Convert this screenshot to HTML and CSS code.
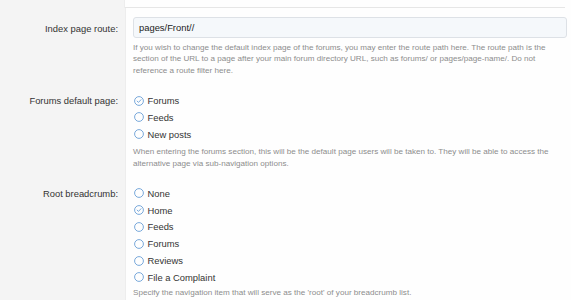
FILE: index.html
```html
<!DOCTYPE html>
<html>
<head>
<meta charset="utf-8">
<link rel="stylesheet" href="styles.css">
</head>
<body>
<div class="form">
  <div class="row row-top">
    <div class="label"></div>
    <div class="content"><div class="sep"></div></div>
  </div>
  <div class="row row-first">
    <div class="label"><span class="label-text label-input">Index page route:</span></div>
    <div class="content">
      <div class="input">pages/Front//</div>
      <p class="hint">If you wish to change the default index page of the forums, you may enter the route path here. The route path is the section of the URL to a page after your main forum directory URL, such as forums/ or pages/page-name/. Do not reference a route filter here.</p>
    </div>
  </div>
  <div class="row">
    <div class="label"><span class="label-text">Forums default page:</span></div>
    <div class="content">
      <ul class="radios">
        <li><span class="radio checked"><svg viewBox="0 0 10 10" width="10" height="10"><circle cx="5" cy="5" r="4.4" fill="none" stroke="#6a9fd6" stroke-width="0.9"/><path d="M3.1 5.1 L4.5 6.4 L7 3.7" fill="none" stroke="#6a9fd6" stroke-width="0.9" stroke-linecap="round" stroke-linejoin="round"/></svg></span>Forums</li>
        <li><span class="radio"><svg viewBox="0 0 10 10" width="10" height="10"><circle cx="5" cy="5" r="4.4" fill="none" stroke="#6a9fd6" stroke-width="0.9"/></svg></span>Feeds</li>
        <li><span class="radio"><svg viewBox="0 0 10 10" width="10" height="10"><circle cx="5" cy="5" r="4.4" fill="none" stroke="#6a9fd6" stroke-width="0.9"/></svg></span>New posts</li>
      </ul>
      <p class="hint hint-after">When entering the forums section, this will be the default page users will be taken to. They will be able to access the alternative page via sub-navigation options.</p>
    </div>
  </div>
  <div class="row">
    <div class="label"><span class="label-text">Root breadcrumb:</span></div>
    <div class="content">
      <ul class="radios">
        <li><span class="radio"><svg viewBox="0 0 10 10" width="10" height="10"><circle cx="5" cy="5" r="4.4" fill="none" stroke="#6a9fd6" stroke-width="0.9"/></svg></span>None</li>
        <li><span class="radio checked"><svg viewBox="0 0 10 10" width="10" height="10"><circle cx="5" cy="5" r="4.4" fill="none" stroke="#6a9fd6" stroke-width="0.9"/><path d="M3.1 5.1 L4.5 6.4 L7 3.7" fill="none" stroke="#6a9fd6" stroke-width="0.9" stroke-linecap="round" stroke-linejoin="round"/></svg></span>Home</li>
        <li><span class="radio"><svg viewBox="0 0 10 10" width="10" height="10"><circle cx="5" cy="5" r="4.4" fill="none" stroke="#6a9fd6" stroke-width="0.9"/></svg></span>Feeds</li>
        <li><span class="radio"><svg viewBox="0 0 10 10" width="10" height="10"><circle cx="5" cy="5" r="4.4" fill="none" stroke="#6a9fd6" stroke-width="0.9"/></svg></span>Forums</li>
        <li><span class="radio"><svg viewBox="0 0 10 10" width="10" height="10"><circle cx="5" cy="5" r="4.4" fill="none" stroke="#6a9fd6" stroke-width="0.9"/></svg></span>Reviews</li>
        <li><span class="radio"><svg viewBox="0 0 10 10" width="10" height="10"><circle cx="5" cy="5" r="4.4" fill="none" stroke="#6a9fd6" stroke-width="0.9"/></svg></span>File a Complaint</li>
      </ul>
      <p class="hint hint-after hint-last">Specify the navigation item that will serve as the 'root' of your breadcrumb list.</p>
    </div>
  </div>
</div>
</body>
</html>
```

FILE: styles.css
```css
html, body {
  margin: 0;
  padding: 0;
  background: #fefefe;
  font-family: "Liberation Sans", Arial, sans-serif;
  color: #333;
}
.form {
  display: flex;
  flex-direction: column;
  height: 300px;
  overflow: hidden;
}
.row {
  display: flex;
}
.row:last-child {
  flex: 1;
}
.label {
  width: 118px;
  flex: none;
  background: #f4f4f4;
  text-align: right;
  padding-right: 7px;
  font-size: 9.4px;
  color: #333;
}
.label-text {
  display: block;
  line-height: 17px;
  padding-top: 16px;
}
.row-first .label-text {
  line-height: 21px;
  padding-top: 10px;
}
.content {
  flex: 1;
  padding: 16px 4px 0 7px;
  border-left: 1px solid #ededed;
}
.row-top .content {
  padding: 0 6px 0 0;
  border-left: 1px solid #ededed;
  margin-left: -1px;
}
.sep {
  height: 7px;
  border-bottom: 1px solid #e6e6e6;
}
.row-first .content {
  padding-top: 9px;
}
.input {
  height: 19px;
  line-height: 19px;
  border: 1px solid #dde1e6;
  border-radius: 3px;
  background: #f5f8fb;
  padding-left: 5px;
  font-size: 9.4px;
  color: #222;
}
.hint {
  margin: 4px 0 0 0;
  font-size: 8.1px;
  line-height: 11.4px;
  color: #8d8d8d;
}
.hint-after {
  margin-top: 3.5px;
}
.hint-last {
  margin-top: 1.5px;
}
.radios {
  list-style: none;
  margin: 0;
  padding: 0;
}
.radios li {
  display: flex;
  align-items: center;
  height: 16.8px;
  font-size: 9.4px;
  color: #333;
}
.radio {
  display: flex;
  width: 14px;
  flex: none;
  padding-left: 0.5px;
}
.radio svg {
  display: block;
}
```
